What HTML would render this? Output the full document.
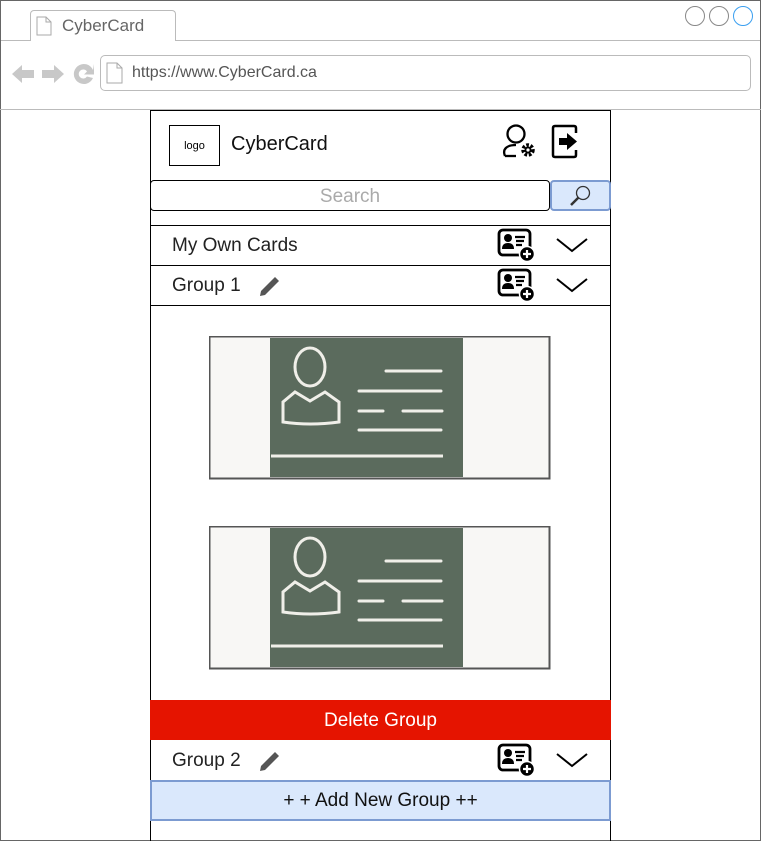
<!DOCTYPE html>
<html><head><meta charset="utf-8"><style>
*{box-sizing:border-box;margin:0;padding:0}
body{width:761px;height:841px;position:relative;background:#fff;font-family:"Liberation Sans",sans-serif;overflow:hidden}
.a{position:absolute}
</style></head><body>
<div class="a" style="left:0;top:0;width:761px;height:841px;border:1px solid #666"></div>
<div class="a" style="left:30px;top:10px;width:146px;height:31px;border:1px solid #bbb;border-bottom:none;border-radius:4px 4px 0 0;background:#fff"></div>
<div class="a" style="left:1px;top:40px;width:759px;height:1px;background:#bbb"></div>
<div class="a" style="left:31px;top:40px;width:144px;height:2px;background:#fff"></div>
<svg class="a" style="left:36px;top:16px" width="16" height="20"><path d="M1 1H10L15 6V19H1Z M10 1V6H15" fill="none" stroke="#aaa"/></svg>
<div class="a" style="left:62px;top:16px;font-size:17px;color:#666">CyberCard</div>
<svg class="a" style="left:684px;top:5px" width="72" height="22"><circle cx="11" cy="11" r="9.5" fill="#fff" stroke="#888"/><circle cx="35" cy="11" r="9.5" fill="#fff" stroke="#888"/><circle cx="59" cy="11" r="9.5" fill="#fff" stroke="#3a9ff0"/></svg>
<svg class="a" style="left:10px;top:62px" width="86" height="24">
<path d="M2 12L12 3V8H24V16H12V21Z" fill="#c8c8c8"/>
<path d="M54 12L44 3V8H32V16H44V21Z" fill="#c8c8c8"/>
<path d="M83 8A10 10 0 1 0 83 16L77 14.5A4.5 4.5 0 1 1 77 9.5L74 12.5H84V2Z" fill="#c8c8c8"/></svg>
<div class="a" style="left:100px;top:55px;width:651px;height:36px;border:1px solid #bbb;border-radius:5px"></div>
<svg class="a" style="left:106px;top:62px" width="18" height="22"><path d="M1 1H11L16 6V21H1Z M11 1V6H16" fill="none" stroke="#aaa"/></svg>
<div class="a" style="left:132px;top:64px;font-size:16px;color:#555">https://www.CyberCard.ca</div>
<div class="a" style="left:0;top:109px;width:761px;height:1px;background:#bbb"></div>

<div class="a" style="left:150px;top:110px;width:461px;height:731px;border:1px solid #000;border-bottom:none"></div>
<div class="a" style="left:169px;top:125px;width:51px;height:41px;border:1px solid #000;font-size:11px;text-align:center;line-height:40px">logo</div>
<div class="a" style="left:231px;top:133px;font-size:20px;color:#111">CyberCard</div>
<svg class="a" style="left:501px;top:123px" width="36" height="36" fill="none" stroke="#000" stroke-width="2.3"><circle cx="15" cy="11" r="8.5"/><path d="M4 33C1 26 6 22 15 22"/><path d="M4 33H15"/><circle cx="27" cy="27" r="4.5" stroke-width="4.5" stroke-dasharray="2.4 1.5"/><circle cx="27" cy="27" r="3.5" fill="#000" stroke="none"/><circle cx="27" cy="27" r="1.6" fill="#fff" stroke="none"/></svg>
<svg class="a" style="left:550px;top:124px" width="32" height="36"><path d="M26 9V4Q26 2 24 2H5Q3 2 3 4V31Q3 33 5 33H24Q26 33 26 31V26" fill="none" stroke="#000" stroke-width="2.5"/><path d="M9 14H17V9L27 17.5L17 26V21H9Z" fill="#000"/></svg>

<div class="a" style="left:150px;top:180px;width:400px;height:31px;border:1px solid #000;border-radius:4px;text-align:center;font-size:19px;color:#aaa;line-height:31px">Search</div>
<div class="a" style="left:550px;top:180px;width:61px;height:31px;border:2px solid #7c9bd1;border-radius:4px;background:#dae8fc"></div>
<svg class="a" style="left:569px;top:184px" width="24" height="24" fill="none" stroke="#333" stroke-width="1.3"><circle cx="14" cy="9" r="6.5"/><path d="M9.5 13.5L2 21" stroke-width="2.5"/></svg>

<div class="a" style="left:150px;top:225px;width:461px;height:1px;background:#000"></div>
<div class="a" style="left:150px;top:265px;width:461px;height:1px;background:#000"></div>
<div class="a" style="left:150px;top:305px;width:461px;height:1px;background:#000"></div>
<div class="a" style="left:172px;top:235px;font-size:19px;color:#222">My Own Cards</div>
<div class="a" style="left:172px;top:275px;font-size:19px;color:#222">Group 1</div>
<div class="a" style="left:172px;top:750px;font-size:19px;color:#222">Group 2</div>

<svg width="0" height="0" style="position:absolute"><defs>
<g id="ac"><rect x="2" y="2" width="31" height="25" rx="4" fill="none" stroke="#000" stroke-width="2.8"/><circle cx="11" cy="10" r="4" fill="#000"/><path d="M5 21Q5 15 11 15Q17 15 17 21Z" fill="#000"/><path d="M18 9H28M19 13H27M19 17H25" stroke="#000" stroke-width="2.2"/><circle cx="30" cy="26" r="7.5" fill="#000" stroke="#fff" stroke-width="1.5"/><path d="M30 22V30M26 26H34" stroke="#fff" stroke-width="2.2"/></g>
<g id="ch"><path d="M2 2L17 14L32 2" fill="none" stroke="#000" stroke-width="2"/></g>
<g id="pen"><path d="M1 21L2 16L16 2L20 6L6 20Z" fill="#555"/></g>
<g id="card"><rect x="0.5" y="0.5" width="340" height="142" fill="#f8f7f5" stroke="#555" stroke-width="2"/><rect x="61" y="2" width="193" height="139" fill="#5b6b5d"/><g fill="none" stroke="#f0efe9" stroke-width="3" stroke-linecap="round"><ellipse cx="101" cy="31" rx="15" ry="19"/><path d="M74 86V66L86 56L101 65L116 56L130 66V86Q101 90 74 86Z"/><path d="M177 35H232M150 55H232M150 75H174M194 75H233M150 94H232"/><path d="M62 120H234" stroke-linecap="butt"/></g></g>
</defs></svg>
<svg class="a" style="left:497px;top:228px" width="42" height="36"><use href="#ac"/></svg>
<svg class="a" style="left:497px;top:268px" width="42" height="36"><use href="#ac"/></svg>
<svg class="a" style="left:497px;top:743px" width="42" height="36"><use href="#ac"/></svg>
<svg class="a" style="left:555px;top:237px" width="34" height="18"><use href="#ch"/></svg>
<svg class="a" style="left:555px;top:277px" width="34" height="18"><use href="#ch"/></svg>
<svg class="a" style="left:555px;top:752px" width="34" height="18"><use href="#ch"/></svg>
<svg class="a" style="left:259px;top:275px" width="24" height="24"><use href="#pen"/></svg>
<svg class="a" style="left:259px;top:750px" width="24" height="24"><use href="#pen"/></svg>

<svg class="a" style="left:209px;top:336px" width="342" height="144"><use href="#card"/></svg>
<svg class="a" style="left:209px;top:526px" width="342" height="144"><use href="#card"/></svg>

<div class="a" style="left:150px;top:700px;width:461px;height:40px;background:#e51400;color:#fff;font-size:19px;text-align:center;line-height:41px">Delete Group</div>
<div class="a" style="left:150px;top:780px;width:461px;height:41px;background:#dae8fc;border:2px solid #7c9bd1;font-size:19px;text-align:center;line-height:38px;color:#111">+ + Add New Group ++</div>
</body></html>
